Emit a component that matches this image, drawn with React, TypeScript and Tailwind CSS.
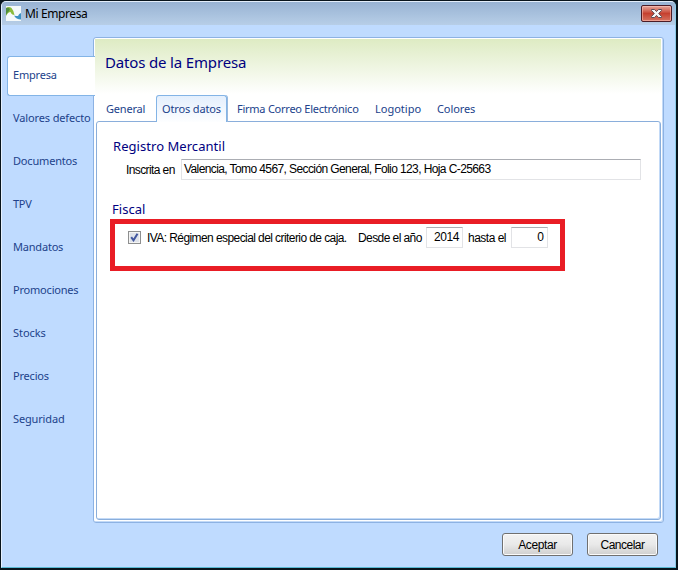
import React from "react";

const sections = [
  { label: "Valores defecto", cls: "tracking-[-0.13px]" },
  { label: "Documentos", cls: "tracking-[-0.18px]" },
  { label: "TPV", cls: "tracking-[-0.3px]" },
  { label: "Mandatos", cls: "tracking-[-0.2px]" },
  { label: "Promociones", cls: "tracking-[-0.2px]" },
  { label: "Stocks", cls: "tracking-[-0.05px]" },
  { label: "Precios", cls: "tracking-[-0.2px]" },
  { label: "Seguridad", cls: "tracking-[-0.15px]" },
];

function AppIcon() {
  return (
    <svg width="15" height="15" viewBox="0 0 15 15" className="ml-[4px] mt-[4px] shrink-0">
      <rect width="15" height="15" fill="#f4f9fa" />
      <path d="M0 2Q3 0 5.5 2Q8 5 8.5 9Q5.500 9 4.500 6Q2 6 0 10Z" fill="#8abb3c" />
      <path d="M0 2Q2 1 4 3L3 5Q1 7 0 9Z" fill="#4f8d3c" />
      <path d="M15 7Q13 7.500 12 10Q10 10 8 9.500Q10 13.500 15 13.500Z" fill="#3d92c4" />
    </svg>
  );
}

function CloseButton() {
  return (
    <div className="mt-[3px] flex h-[17px] w-[31px] items-center justify-center rounded-[2px] border border-[#4b1c26] bg-linear-to-b from-[#e5a69c] from-0% via-[#c5402f] via-50% to-[#d5715f] shadow-[inset_0_0_0_1px_rgba(255,200,190,0.55)]">
      <svg width="13" height="11" viewBox="0 0 13 11">
        <path d="M1.500 1.500h3l2 2.100L8.500 1.500H11.500v1L8.700 5.500 11.500 8.500V9.500H8.500L6.500 7.400 4.500 9.500H1.500V8.500l2.800-3L1.500 2.500Z" fill="#f7f7f7" stroke="#5c4c55" strokeWidth="1" />
      </svg>
    </div>
  );
}

function Tab({ label, cls }: { label: string; cls: string }) {
  return <div className={`h-[26px] whitespace-nowrap pt-[5px] leading-[17px] ${cls}`}>{label}</div>;
}

function Field({ value, cls }: { value: string; cls: string }) {
  return (
    <div className={`h-[21px] whitespace-pre border border-[#e2e3e6] border-t-[#abadb3] bg-white leading-[18px] ${cls}`}>
      {value}
    </div>
  );
}

function DialogButton({ label, cls }: { label: string; cls: string }) {
  return (
    <div className="flex h-[23px] w-[71px] items-center justify-center rounded-[3px] border border-[#707070] bg-linear-to-b from-[#f3f3f3] from-0% via-[#e9e9e9] via-50% to-[#cfcfcf] shadow-[inset_0_0_0_1px_#fafafa]">
      <span className={cls}>{label}</span>
    </div>
  );
}

export default function App() {
  return (
    <div className="h-[570px] w-[678px] overflow-hidden bg-[#08141c] pb-[2px] pl-px pr-[2px] pt-px font-['Liberation_Sans',Arial,sans-serif] text-[12px] text-black">
      <div className="flex h-[567px] w-[675px] flex-col overflow-hidden rounded-t-[5px] border-b border-l border-r border-t border-b-[#58b9d3] border-l-[#e6f1ff] border-r-[#8ccbe6] border-t-[#e3eefa] bg-[#bfdbff]">
        <header className="flex h-[23px] shrink-0 justify-between bg-linear-to-b from-[#98b3d3] to-[#b7cee7] pr-[3px] font-['Noto_Sans',sans-serif] text-[12px]">
          <div className="flex">
            <AppIcon />
            <span className="ml-[4px] mt-[4px] whitespace-nowrap leading-[16px] tracking-[-0.4px]">Mi Empresa</span>
          </div>
          <div className="shrink-0">
            <CloseButton />
          </div>
        </header>

        <main className="mt-[12px] flex h-[486px] shrink-0">
          <nav className="w-[91px] shrink-0 pl-[5px] pt-[19px] font-['Noto_Sans',sans-serif] text-[11px] text-[#21428b]">
            <div className="relative z-10 h-[40px] w-[88px] rounded-l-[3px] border border-r-0 border-[#83b4e6] bg-white pl-[5px] pt-[9px] leading-[18px] tracking-[-0.2px]">
              Empresa
            </div>
            <div className="flex flex-col pl-[6px] pt-[3px]">
              {sections.map((s) => (
                <div key={s.label} className={`h-[43px] whitespace-nowrap pt-[10px] leading-[18px] ${s.cls}`}>
                  {s.label}
                </div>
              ))}
            </div>
          </nav>

          <section className="h-[486px] w-[571px] shrink-0 rounded-[3px] border border-[#8db2e3] bg-white p-px pr-[2px] shadow-[inset_-1px_-1px_0_#c3daf7]">
            <div className="h-[55px] bg-linear-to-b from-[#deebc3] to-white pl-[10px] pt-[11px]">
              <h1 className="whitespace-nowrap font-['Noto_Sans',sans-serif] text-[15px] leading-[24px] tracking-[-0.16px] text-[#000080]">
                Datos de la Empresa
              </h1>
            </div>
            <div className="flex h-[27px] pl-[11px] pt-px font-['Noto_Sans',sans-serif] text-[11px] text-[#21428b]">
              <div className="w-[50px]">
                <Tab label="General" cls="tracking-[-0.2px]" />
              </div>
              <div className="relative z-10 h-[27px] w-[71px] rounded-t-[3px] border border-b-0 border-[#83b4e6] bg-linear-to-b from-[#e4effd] to-[#fdfeff] pl-[5px] shadow-[1px_0_0_#9ab9dd]">
                <div className="-mt-px">
                  <Tab label="Otros datos" cls="tracking-[-0.15px]" />
                </div>
              </div>
              <div className="ml-[10px] w-[138px]">
                <Tab label="Firma Correo Electrónico" cls="tracking-[-0.25px]" />
              </div>
              <div className="w-[62px]">
                <Tab label="Logotipo" cls="tracking-[0px]" />
              </div>
              <Tab label="Colores" cls="tracking-[-0.1px]" />
            </div>

            <div className="ml-px h-[399px] w-[565px] rounded-[3px] border border-[#8aaedb] bg-white pl-[13px] pt-[14px] shadow-[inset_-1px_-1px_0_#c3daf7]">
              <h2 className="ml-[3px] whitespace-nowrap font-['Noto_Sans',sans-serif] text-[13px] leading-[20px] tracking-[0.05px] text-[#000080]">
                Registro Mercantil
              </h2>
              <div className="mt-[3px] flex h-[21px]">
                <span className="ml-[16px] w-[55px] whitespace-nowrap pt-px leading-[20px] tracking-[-0.6px]">Inscrita en</span>
                <Field value="Valencia, Tomo 4567, Sección General, Folio 123, Hoja C-25663" cls="w-[460px] pl-[2px] tracking-[-0.6px]" />
              </div>
              <h2 className="ml-[2px] mt-[19px] whitespace-nowrap font-['Noto_Sans',sans-serif] text-[13px] leading-[20px] tracking-[0.05px] text-[#000080]">
                Fiscal
              </h2>
              <div className="h-[52px] w-[455px] border-[5px] border-[#e91d25] pt-[3px]">
                <div className="flex h-[21px]">
                  <div className="ml-[13px] mt-[4px] flex h-[13px] w-[13px] items-center justify-center border border-[#8e8f8f] bg-[#dfe3ea] shadow-[inset_0_0_0_1px_#f4f4f4]">
                    <svg width="9" height="9" viewBox="0 0 9 9">
                      <path d="M1.2 4.2L3.5 7.3L7.500 0.800" fill="none" stroke="#41569f" strokeWidth="2" />
                    </svg>
                  </div>
                  <span className="ml-[6px] w-[211px] whitespace-nowrap leading-[22px] tracking-[-0.58px]">
                    IVA: Régimen especial del criterio de caja.
                  </span>
                  <span className="w-[68px] whitespace-nowrap leading-[22px] tracking-[-0.58px]">Desde el año</span>
                  <Field value="2014" cls="w-[37px] pr-[3px] text-right tracking-[-0.4px]" />
                  <span className="ml-[5px] w-[43px] whitespace-nowrap leading-[22px] tracking-[-0.5px]">hasta el</span>
                  <Field value="0" cls="w-[37px] pr-[3px] text-right" />
                </div>
              </div>
            </div>
          </section>
        </main>

        <footer className="mt-[10px] flex justify-end gap-[14px] pr-[17px]">
          <DialogButton label="Aceptar" cls="tracking-[-0.4px]" />
          <DialogButton label="Cancelar" cls="tracking-[-0.5px]" />
        </footer>
      </div>
    </div>
  );
}
